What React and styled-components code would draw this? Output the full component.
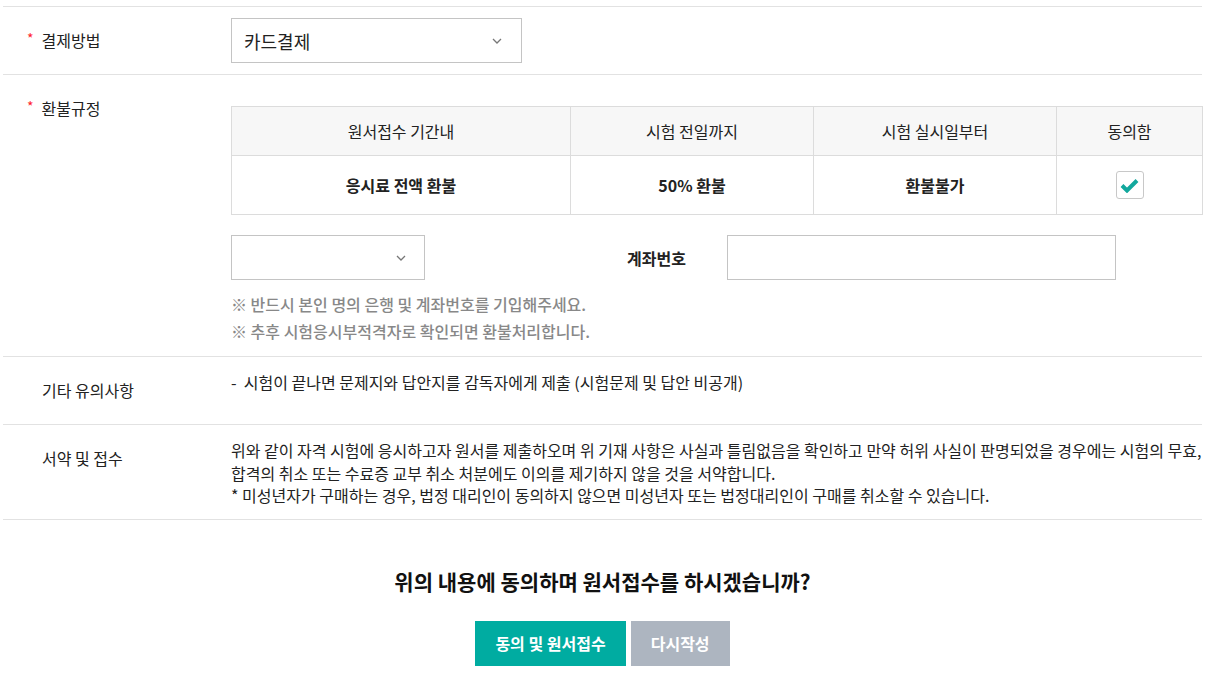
import React from "react";
import styled, { createGlobalStyle } from "styled-components";

const GlobalStyle = createGlobalStyle`
  * { box-sizing: border-box; }
  body {
    margin: 0;
    background: #fff;
    color: #222;
    font-family: "Noto Sans CJK KR", "Noto Sans", sans-serif;
  }
`;

const Chevron = ({ size = 12 }) => (
  <svg width={size} height={size} viewBox="0 0 12 12" fill="none">
    <path d="M2 4l4 4 4-4" stroke="#777" strokeWidth="1.3" />
  </svg>
);

const CheckIcon = () => (
  <svg width="19" height="15" viewBox="0 0 19 15" fill="none">
    <path d="M2 7.5l5 5 10-10" stroke="#12a89d" strokeWidth="4" strokeLinejoin="miter" />
  </svg>
);

const App = () => {
  return (
    <S.Page>
      <GlobalStyle />
      <S.Form>
        <S.Row>
          <S.Label required>결제방법</S.Label>
          <S.Content>
            <S.Select width="291px">
              <S.SelectText>카드결제</S.SelectText>
              <Chevron />
            </S.Select>
          </S.Content>
        </S.Row>

        <S.Row>
          <S.Label required>환불규정</S.Label>
          <S.Content pt="31px">
            <S.Table>
              <thead>
                <tr>
                  <S.Th style={{ width: "339px" }}>원서접수 기간내</S.Th>
                  <S.Th style={{ width: "243px" }}>시험 전일까지</S.Th>
                  <S.Th style={{ width: "243px" }}>시험 실시일부터</S.Th>
                  <S.Th>동의함</S.Th>
                </tr>
              </thead>
              <tbody>
                <tr>
                  <S.Td>응시료 전액 환불</S.Td>
                  <S.Td>50% 환불</S.Td>
                  <S.Td>환불불가</S.Td>
                  <S.Td>
                    <S.CheckBox>
                      <CheckIcon />
                    </S.CheckBox>
                  </S.Td>
                </tr>
              </tbody>
            </S.Table>
            <S.AccountRow>
              <S.Select width="194px" small>
                <span />
                <Chevron />
              </S.Select>
              <S.AccountLabel>계좌번호</S.AccountLabel>
              <S.Input />
            </S.AccountRow>
            <S.Notes>
              <S.Note>※ 반드시 본인 명의 은행 및 계좌번호를 기입해주세요.</S.Note>
              <S.Note>※ 추후 시험응시부적격자로 확인되면 환불처리합니다.</S.Note>
            </S.Notes>
          </S.Content>
        </S.Row>

        <S.Row>
          <S.Label>기타 유의사항</S.Label>
          <S.Content pt="14px">
            <S.Text>-&nbsp; 시험이 끝나면 문제지와 답안지를 감독자에게 제출 (시험문제 및 답안 비공개)</S.Text>
          </S.Content>
        </S.Row>

        <S.Row>
          <S.Label>서약 및 접수</S.Label>
          <S.Content pt="14px" pb="12px">
            <S.Text>
              위와 같이 자격 시험에 응시하고자 원서를 제출하오며 위 기재 사항은 사실과 틀림없음을 확인하고 만약 허위 사실이 판명되었을 경우에는 시험의 무효,
              <br />
              합격의 취소 또는 수료증 교부 취소 처분에도 이의를 제기하지 않을 것을 서약합니다.
              <br />* 미성년자가 구매하는 경우, 법정 대리인이 동의하지 않으면 미성년자 또는 법정대리인이 구매를 취소할 수 있습니다.
            </S.Text>
          </S.Content>
        </S.Row>
      </S.Form>

      <S.Confirm>
        <S.Question>위의 내용에 동의하며 원서접수를 하시겠습니까?</S.Question>
        <S.Buttons>
          <S.Button primary>동의 및 원서접수</S.Button>
          <S.Button>다시작성</S.Button>
        </S.Buttons>
      </S.Confirm>
    </S.Page>
  );
};

const S = {
  Page: styled.div`
    width: 1232px;
    padding: 6px 0 0 3px;
  `,
  Form: styled.div`
    width: 1199px;
    border-top: 1px solid #e2e2e2;
  `,
  Row: styled.div`
    display: flex;
    min-height: 68px;
    border-bottom: 1px solid #e2e2e2;
  `,
  Label: styled.div`
    width: 228px;
    flex-shrink: 0;
    padding: 22px 0 0 ${(p) => (p.required ? "24px" : "39px")};
    font-size: 16px;
    line-height: 22px;
    color: #222;
    &::before {
      content: ${(p) => (p.required ? '"*"' : "none")};
      color: #ff1f2f;
      font-size: 14px;
      margin-right: 8px;
      position: relative;
      top: -3px;
    }
  `,
  Content: styled.div`
    flex: 1;
    padding: ${(p) => p.pt || "11px"} 0 ${(p) => p.pb || "11px"} 0;
  `,
  Select: styled.div`
    width: ${(p) => p.width};
    height: 45px;
    border: 1px solid #c4c4c4;
    background: #fff;
    display: flex;
    align-items: center;
    justify-content: space-between;
    padding: 0 ${(p) => (p.small ? "17px" : "18px")} 0 12px;
  `,
  SelectText: styled.span`
    font-size: 18px;
    color: #222;
  `,
  Table: styled.table`
    width: 972px;
    border-collapse: collapse;
    border: 1px solid #dcdcdc;
    text-align: center;
  `,
  Th: styled.th`
    height: 49px;
    background: #f7f7f7;
    border: 1px solid #dcdcdc;
    font-weight: 400;
    font-size: 16px;
    color: #222;
  `,
  Td: styled.td`
    height: 59px;
    border: 1px solid #dcdcdc;
    font-weight: 700;
    font-size: 16px;
    color: #222;
  `,
  CheckBox: styled.span`
    display: inline-flex;
    align-items: center;
    justify-content: center;
    width: 28px;
    height: 28px;
    border: 1px solid #c8c8c8;
    border-radius: 3px;
    vertical-align: middle;
    background: #fff;
  `,
  AccountRow: styled.div`
    display: flex;
    align-items: center;
    margin-top: 20px;
  `,
  AccountLabel: styled.div`
    width: 302px;
    text-align: right;
    padding-right: 41px;
    font-size: 16px;
    font-weight: 700;
    color: #222;
  `,
  Input: styled.div`
    width: 389px;
    height: 45px;
    border: 1px solid #c4c4c4;
  `,
  Notes: styled.div`
    margin-top: 11px;
  `,
  Note: styled.p`
    margin: 0;
    font-size: 16px;
    line-height: 27px;
    font-weight: 500;
    color: #888;
  `,
  Text: styled.p`
    margin: 0;
    font-size: 16px;
    line-height: 22.5px;
    color: #222;
  `,
  Confirm: styled.div`
    width: 1199px;
    display: flex;
    flex-direction: column;
    align-items: center;
    padding-top: 46px;
  `,
  Question: styled.h2`
    margin: 0;
    font-size: 21px;
    font-weight: 700;
    color: #111;
    line-height: 30px;
  `,
  Buttons: styled.div`
    display: flex;
    gap: 5px;
    margin-top: 25px;
  `,
  Button: styled.button`
    height: 45px;
    padding: 0 20px;
    border: 0;
    background: ${(p) => (p.primary ? "#00aca1" : "#adb5c0")};
    color: #fff;
    font-family: inherit;
    font-size: 16px;
    font-weight: 700;
  `,
};

export default App;
